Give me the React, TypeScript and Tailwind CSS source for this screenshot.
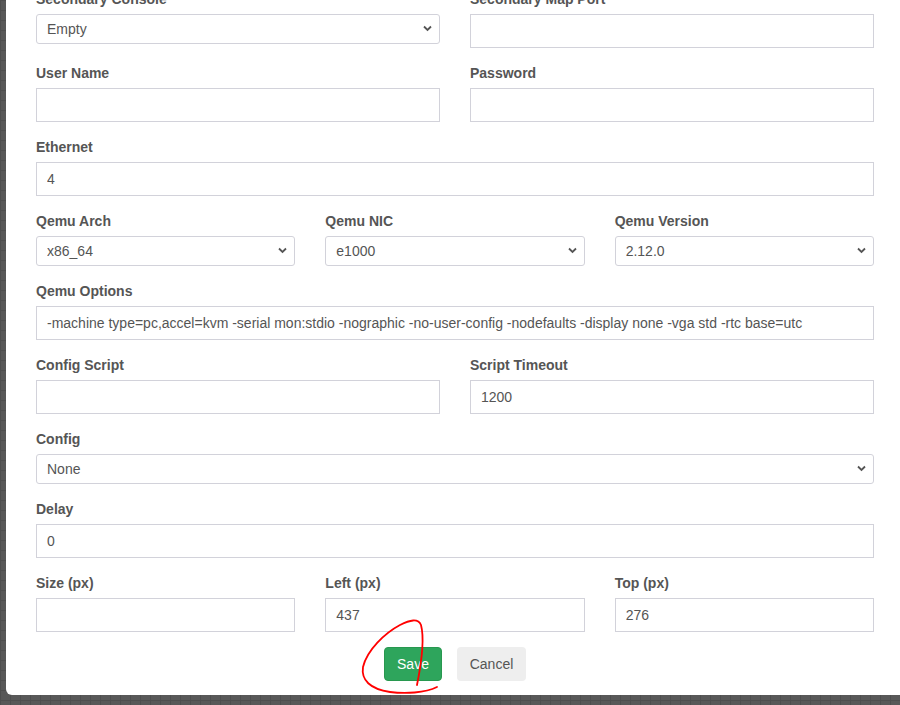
import React from 'react'

const font = { fontFamily: '"Liberation Sans", Arial, sans-serif' }

function Label({ children }: { children: React.ReactNode }) {
  return <label className="block text-[14px] leading-[20px] font-bold text-[#555] mb-[5px]">{children}</label>
}

function TextInput({ value = '' }: { value?: string }) {
  return (
    <input
      readOnly
      value={value}
      className="block w-full h-[34px] border border-[#d2d2da] bg-white px-[10px] text-[14px] text-[#555] outline-none"
    />
  )
}

function Select({ value }: { value: string }) {
  return (
    <div className="relative h-[30px]">
      <select
        defaultValue={value}
        className="block w-full h-[30px] appearance-none border border-[#d2d2da] rounded-[3px] bg-white pl-[10px] pr-[28px] text-[14px] text-[#555] outline-none"
      >
        <option>{value}</option>
      </select>
      <svg
        className="absolute right-[8px] top-[11px] pointer-events-none"
        width="9"
        height="7"
        viewBox="0 0 9 7"
      >
        <path d="M1 1.5 L4.5 5 L8 1.5" fill="none" stroke="#555" strokeWidth="1.8" />
      </svg>
    </div>
  )
}

function Field({ label, children }: { label: string; children: React.ReactNode }) {
  return (
    <div className="mb-[15px]">
      <Label>{label}</Label>
      {children}
    </div>
  )
}

export default function App() {
  return (
    <div
      className="w-[900px] h-[705px] overflow-hidden flex flex-col justify-end pb-[10px] bg-[#585858] bg-[linear-gradient(#4e4e4e_1px,transparent_1px),linear-gradient(90deg,#4e4e4e_1px,transparent_1px)] bg-[length:10px_10px]"
      style={font}
    >
      <div className="ml-[6px] w-[898px] shrink-0 bg-white rounded-bl-[6px] px-[30px] pb-[14px]">
        <div className="grid grid-cols-2 gap-x-[30px]">
          <Field label="Secondary Console">
            <Select value="Empty" />
          </Field>
          <Field label="Secondary Map Port">
            <TextInput />
          </Field>
          <Field label="User Name">
            <TextInput />
          </Field>
          <Field label="Password">
            <TextInput />
          </Field>
        </div>
        <Field label="Ethernet">
          <TextInput value="4" />
        </Field>
        <div className="grid grid-cols-3 gap-x-[30px]">
          <Field label="Qemu Arch">
            <Select value="x86_64" />
          </Field>
          <Field label="Qemu NIC">
            <Select value="e1000" />
          </Field>
          <Field label="Qemu Version">
            <Select value="2.12.0" />
          </Field>
        </div>
        <Field label="Qemu Options">
          <TextInput value="-machine type=pc,accel=kvm -serial mon:stdio -nographic -no-user-config -nodefaults -display none -vga std -rtc base=utc" />
        </Field>
        <div className="grid grid-cols-2 gap-x-[30px]">
          <Field label="Config Script">
            <TextInput />
          </Field>
          <Field label="Script Timeout">
            <TextInput value="1200" />
          </Field>
        </div>
        <Field label="Config">
          <Select value="None" />
        </Field>
        <Field label="Delay">
          <TextInput value="0" />
        </Field>
        <div className="grid grid-cols-3 gap-x-[30px]">
          <Field label="Size (px)">
            <TextInput />
          </Field>
          <Field label="Left (px)">
            <TextInput value="437" />
          </Field>
          <Field label="Top (px)">
            <TextInput value="276" />
          </Field>
        </div>
        <div className="relative flex justify-center gap-[15px]">
          <button className="h-[34px] w-[58px] rounded-[4px] bg-[#2ea55c] border border-[#28984f] text-white text-[14px]">
            Save
          </button>
          <button className="h-[34px] w-[69px] rounded-[4px] bg-[#eeeeee] text-[#555] text-[14px]">
            Cancel
          </button>
          <svg
            className="absolute left-[319px] top-[-32px] pointer-events-none"
            width="90"
            height="85"
            viewBox="0 0 90 85"
          >
            <path
              d="M62 70 C66 50 70 25 66 10 C63 3 55 5 45 10 C30 18 12 35 8 52 C6 65 15 74 35 77 C50 79 70 78 82 72"
              fill="none"
              stroke="#f00"
              strokeWidth="1.8"
              strokeLinecap="round"
            />
          </svg>
        </div>
      </div>
    </div>
  )
}
